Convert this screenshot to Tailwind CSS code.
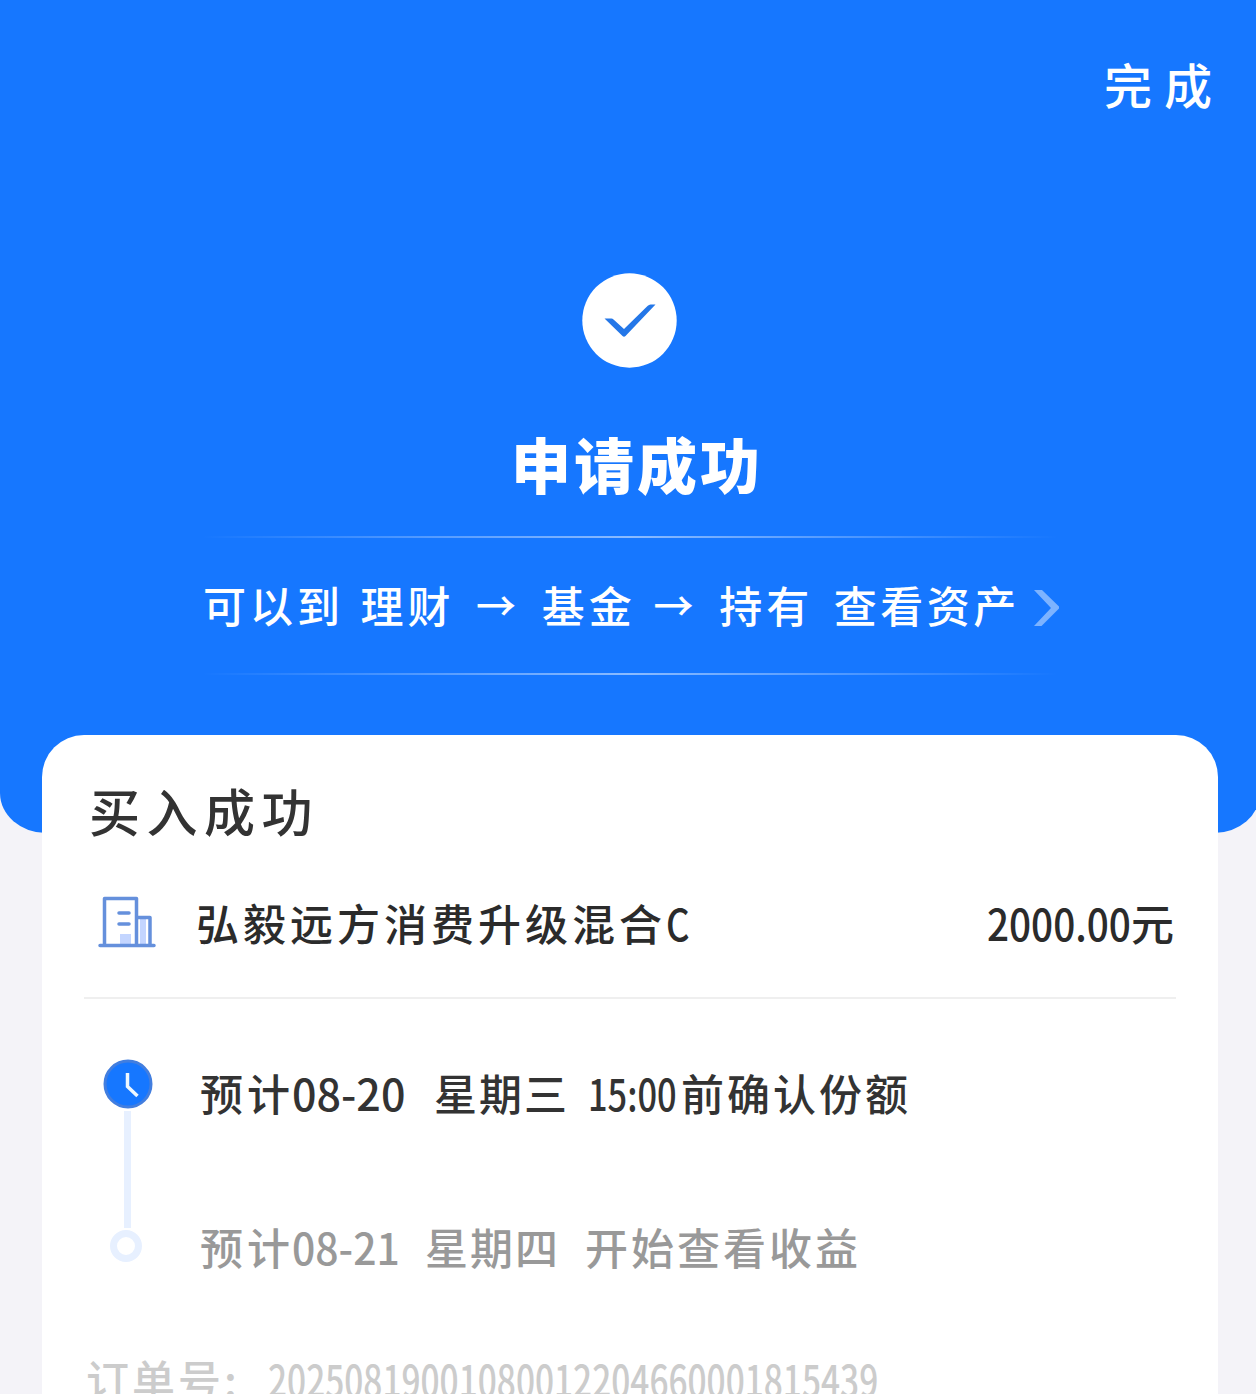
<!DOCTYPE html>
<html lang="zh-CN">
<head>
<meta charset="utf-8">
<title>申请成功</title>
<script src="https://cdn.jsdelivr.net/npm/@tailwindcss/browser@4"></script>
</head>
<body class="h-[1394px] w-[1256px] overflow-hidden bg-[#f4f3f8] font-['Noto_Sans_CJK_SC',sans-serif] font-medium whitespace-nowrap">
<header class="flex h-[833px] w-[1260px] flex-col items-center rounded-b-[46px_40px] bg-[#1677ff] text-white">
  <div class="flex h-[168px] w-full justify-end pr-[36px]">
    <button class="mt-[58px] h-[50px] text-[48px] leading-[50px] tracking-[12px]">完成</button>
  </div>
  <svg class="mt-[105px] mr-px size-[95px] shrink-0" viewBox="0 0 95 95"><circle cx="47.5" cy="47.5" r="47.2" fill="#fff"/><path d="M22.500 45.500h7q1 0 2 1L42 56 65.500 33q1.500-1.500 3-1.500h5L43.500 63q-1.500 1.500-3 0z" fill="#2477e8"/></svg>
  <h1 class="mt-[64px] ml-[14px] h-[62px] text-[60px] leading-[62px] font-black tracking-[3px]">申请成功</h1>
  <div class="mt-[42px] h-[2px] w-[856px] bg-linear-to-r from-white/0 via-white/50 to-white/0"></div>
  <a class="flex h-[135px] w-[860px] items-center pb-[3px] pl-[3px] text-[43px] leading-none tracking-[4px]">
    <span class="w-[158px]">可以到</span>
    <span class="w-[116px]">理财</span>
    <span class="w-[66px] text-[40px]">→</span>
    <span class="w-[112px]">基金</span>
    <span class="w-[66px] text-[40px]">→</span>
    <span class="w-[115px]">持有</span>
    <span class="w-[201px] tracking-[3.500px]">查看资产</span>
    <svg class="mt-[7px] h-[36px] w-[26px] shrink-0" viewBox="0 0 26 36"><path d="M0 0h8L25 16.500v2L7.500 36H0L17 18z" fill="#7db3ff"/></svg>
  </a>
  <div class="h-[2px] w-[856px] bg-linear-to-r from-white/0 via-white/50 to-white/0"></div>
</header>
<main class="relative -mt-[98px] ml-[42px] h-[700px] w-[1176px] rounded-t-[42px] bg-white px-[42px] text-[43px] leading-none tracking-[4px] text-[#333]">
  <h2 class="pt-[48px] pl-[5px] text-[51px] leading-[54px] tracking-[6.500px]">买入成功</h2>
  <section class="mt-[36px] flex h-[126px] items-start border-b-2 border-[#efefef] text-[#2b2b2b]">
    <svg class="mt-[22px] ml-[14px] h-[54px] w-[60px] shrink-0" viewBox="0 0 60 54" fill="none" stroke="#6590dc" stroke-width="3.500" stroke-linecap="round" stroke-linejoin="round"><path d="M22 39h11v11H22zM42 22h6v28h-6z" fill="#c3d5ff" stroke="none"/><path d="M6.500 50V3.500h32V50M39 22.500h13V50M2 50.500h54M21 18h10M21 29h10"/></svg>
    <span class="mt-[28px] ml-[38px] tracking-[4px]">弘毅远方消费升级混合<span class="inline-block origin-left scale-x-85">C</span></span>
    <span class="mt-[28px] ml-auto flex tracking-normal"><span class="w-[144px]"><span class="inline-block origin-left scale-x-90">2000.00</span></span><span class="w-[45px]">元</span></span>
  </section>
  <section class="flex h-[337px]">
    <div class="flex w-[86px] flex-col items-center pt-[60px]">
      <svg class="ml-px size-[50px] shrink-0" viewBox="0 0 50 50"><circle cx="25" cy="25" r="23" fill="#1677ff" stroke="#427edf" stroke-width="3"/><path d="M24.500 14v13.500l10 9.500" fill="none" stroke="#eef8ff" stroke-width="3.500"/></svg>
      <div class="mt-[2px] h-[117px] w-[7px] bg-[#e7f0ff]"></div>
      <div class="mt-[2px] mr-[3px] size-[32px] rounded-full border-[7px] border-[#e7f0ff]"></div>
    </div>
    <div class="ml-[30px]">
      <div class="flex pt-[72px]">
        <span class="w-[92px]">预计</span>
        <span class="w-[142px] tracking-normal">08-20</span>
        <span class="w-[154px] tracking-[2px]">星期三</span>
        <span class="w-[93px] tracking-normal"><span class="inline-block origin-left scale-x-80">15:00</span></span>
        <span class="tracking-[3px]">前确认份额</span>
      </div>
      <div class="flex pt-[111px] text-[#999]">
        <span class="w-[92px]">预计</span>
        <span class="w-[133px] tracking-normal"><span class="inline-block origin-left scale-x-95">08-21</span></span>
        <span class="w-[160px] tracking-[2px]">星期四</span>
        <span class="tracking-[3px]">开始查看收益</span>
      </div>
    </div>
  </section>
  <footer class="flex pt-[21px] pl-[2px] text-[#ccc]"><span class="w-[182px] tracking-[3px]">订单号:</span><span class="inline-block origin-left scale-x-[0.778] tracking-normal">20250819001080012204660001815439</span></footer>
</main>
</body>
</html>
